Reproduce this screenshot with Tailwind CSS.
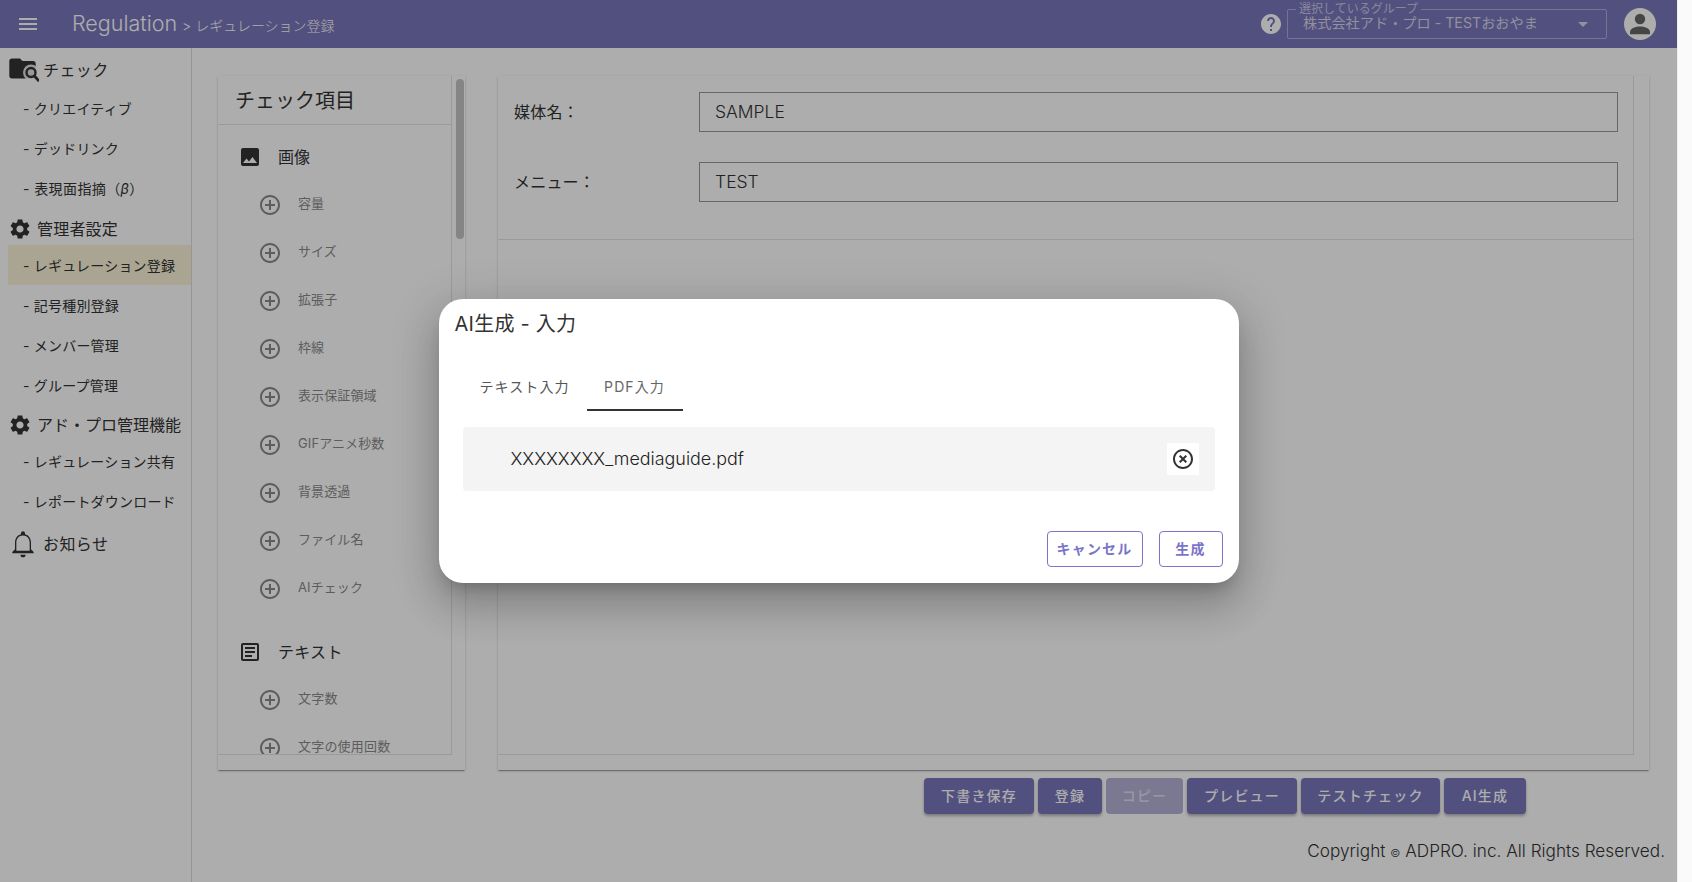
<!DOCTYPE html>
<html lang="ja">
<head>
<meta charset="UTF-8">
<title>Regulation</title>
<script src="https://cdn.jsdelivr.net/npm/@tailwindcss/browser@4"></script>
</head>
<body class="m-0 overflow-hidden bg-white [font-family:'Inter','Noto_Sans_CJK_JP',sans-serif] text-[#333]">
<div class="flex h-[882px] w-[1692px]">
  <div class="relative h-full w-[1677px] overflow-hidden">
    <!-- Header -->
    <header class="flex h-12 items-center bg-[#7a76bb] text-white">
      <svg class="ml-[16px] h-6 w-6" viewBox="0 0 24 24" fill="currentColor"><path d="M3 18h18v-2H3v2zm0-5h18v-2H3v2zm0-7v2h18V6H3z"/></svg>
      <span class="ml-[32px] text-[21.500px] font-light leading-none">Regulation</span>
      <span class="ml-[5px] mt-[3px] text-[14px] font-light">&gt; レギュレーション登録</span>
      <div class="ml-auto flex items-center">
        <svg class="h-6 w-6" viewBox="0 0 24 24" fill="#fff"><path d="M12 2C6.48 2 2 6.48 2 12s4.48 10 10 10 10-4.48 10-10S17.52 2 12 2zm1 17h-2v-2h2v2zm2.07-7.75l-.9.92C13.45 12.9 13 13.5 13 15h-2v-.5c0-1.1.45-2.1 1.17-2.83l1.24-1.26c.37-.36.59-.86.59-1.41 0-1.1-.9-2-2-2s-2 .9-2 2H8c0-2.21 1.79-4 4-4s4 1.79 4 4c0 .88-.36 1.68-.93 2.25z"/></svg>
        <div class="relative ml-[4px] flex h-[30px] w-[320px] items-center rounded-[2px] border border-white/40 pl-[15px] pr-[11px]">
          <span class="absolute left-[8px] top-[-8px] bg-[#7a76bb] px-[3px] text-[12px] leading-[14px] text-white/60">選択しているグループ</span>
          <span class="mt-[-3px] text-[14.200px] text-white/70">株式会社アド・プロ - TESTおおやま</span>
          <svg class="ml-auto h-6 w-6" viewBox="0 0 24 24" fill="#fff" fill-opacity=".7"><path d="M7 10l5 5 5-5z"/></svg>
        </div>
        <svg class="ml-[16px] mr-[20px] h-[34px] w-[34px]" viewBox="0 0 34 34"><circle cx="17" cy="17" r="16" fill="#fff"/><circle cx="17" cy="12" r="5.200" fill="#666"/><path d="M7 25c0-4 6-5.600 10-5.600S27 21 27 25v2.200H7z" fill="#666"/></svg>
      </div>
    </header>

    <div class="flex h-[834px]">
      <!-- Sidebar -->
      <nav class="h-full w-[192px] shrink-0 border-r border-[#ddd]">
        <div class="mt-[2px] flex h-[38px] items-center pl-[9px] pt-[2px] text-[16px] tracking-[.4px]">
          <svg class="mt-[1px] h-[27px] w-[30px]" viewBox="0 0 30 27"><path d="M3 1.500h8l2.500 2.500H24c1.600 0 2.700 1.100 2.700 2.700V19c0 1.500-1.100 2.500-2.700 2.500H3c-1.600 0-2.700-1-2.700-2.500V4C.3 2.500 1.400 1.500 3 1.500z" fill="#333"/><circle cx="22" cy="15.500" r="8" fill="#fff" fill-opacity=".85"/><circle cx="22" cy="15.500" r="4.500" fill="none" stroke="#333" stroke-width="2.400"/><path d="M25.500 19l3.800 4.300" stroke="#333" stroke-width="2.800" stroke-linecap="round"/></svg>
          <span class="ml-[4px]">チェック</span>
        </div>
        <a class="flex h-10 items-center pl-[23px] text-[14px] tracking-[.2px]">- クリエイティブ</a>
        <a class="flex h-10 items-center pl-[23px] text-[14px] tracking-[.2px]">- デッドリンク</a>
        <a class="flex h-10 items-center pl-[23px] text-[14px] tracking-[.4px]">- 表現面指摘（<i>β</i>）</a>
        <div class="flex h-[37px] items-center pl-[8px] pt-[5px] text-[16px] tracking-[.2px]">
          <svg class="h-6 w-6" viewBox="0 0 24 24" fill="#333"><path d="M19.14 12.94c.04-.3.06-.61.06-.94 0-.32-.02-.64-.07-.94l2.03-1.58c.18-.14.23-.41.12-.61l-1.92-3.32c-.12-.22-.37-.29-.59-.22l-2.39.96c-.5-.38-1.03-.7-1.62-.94l-.36-2.54c-.04-.24-.24-.41-.48-.41h-3.84c-.24 0-.43.17-.47.41l-.36 2.54c-.59.24-1.13.57-1.62.94l-2.39-.96c-.22-.08-.47 0-.59.22L2.74 8.87c-.12.21-.08.47.12.61l2.03 1.58c-.05.3-.09.63-.09.94s.02.64.07.94l-2.03 1.58c-.18.14-.23.41-.12.61l1.92 3.32c.12.22.37.29.59.22l2.39-.96c.5.38 1.03.7 1.62.94l.36 2.54c.05.24.24.41.48.41h3.84c.24 0 .44-.17.47-.41l.36-2.54c.59-.24 1.13-.56 1.62-.94l2.39.96c.22.08.47 0 .59-.22l1.92-3.32c.12-.22.07-.47-.12-.61l-2.01-1.58zM12 15.6c-1.98 0-3.6-1.62-3.6-3.6s1.62-3.6 3.6-3.6 3.6 1.62 3.6 3.6-1.62 3.6-3.6 3.6z"/></svg>
          <span class="ml-[5px]">管理者設定</span>
        </div>
        <a class="ml-[8px] flex h-10 items-center bg-[#fbf4d7] pl-[15px] text-[14px] tracking-[.2px]">- レギュレーション登録</a>
        <a class="flex h-10 items-center pl-[23px] text-[14px] tracking-[.2px]">- 記号種別登録</a>
        <a class="flex h-10 items-center pl-[23px] text-[14px] tracking-[.2px]">- メンバー管理</a>
        <a class="flex h-10 items-center pl-[23px] text-[14px] tracking-[.2px]">- グループ管理</a>
        <div class="flex h-[36px] items-center pl-[8px] pt-[4px] text-[16px]">
          <svg class="h-6 w-6" viewBox="0 0 24 24" fill="#333"><path d="M19.14 12.94c.04-.3.06-.61.06-.94 0-.32-.02-.64-.07-.94l2.03-1.58c.18-.14.23-.41.12-.61l-1.92-3.32c-.12-.22-.37-.29-.59-.22l-2.39.96c-.5-.38-1.03-.7-1.62-.94l-.36-2.54c-.04-.24-.24-.41-.48-.41h-3.84c-.24 0-.43.17-.47.41l-.36 2.54c-.59.24-1.13.57-1.62.94l-2.39-.96c-.22-.08-.47 0-.59.22L2.74 8.87c-.12.21-.08.47.12.61l2.03 1.58c-.05.3-.09.63-.09.94s.02.64.07.94l-2.03 1.58c-.18.14-.23.41-.12.61l1.92 3.32c.12.22.37.29.59.22l2.39-.96c.5.38 1.03.7 1.62.94l.36 2.54c.05.24.24.41.48.41h3.84c.24 0 .44-.17.47-.41l.36-2.54c.59-.24 1.13-.56 1.62-.94l2.39.96c.22.08.47 0 .59-.22l1.92-3.32c.12-.22.07-.47-.12-.61l-2.01-1.58zM12 15.6c-1.98 0-3.6-1.62-3.6-3.6s1.62-3.6 3.6-3.6 3.6 1.62 3.6 3.6-1.62 3.6-3.6 3.6z"/></svg>
          <span class="ml-[5px]">アド・プロ管理機能</span>
        </div>
        <a class="flex h-10 items-center pl-[23px] text-[14px] tracking-[.2px]">- レギュレーション共有</a>
        <a class="flex h-10 items-center pl-[23px] text-[14px] tracking-[.2px]">- レポートダウンロード</a>
        <div class="flex h-[45px] items-center pl-[7px] text-[16px] tracking-[.4px]">
          <svg class="h-[32px] w-[32px]" viewBox="0 0 24 24" fill="#333"><path d="M12 22c1.100 0 2-.9 2-2h-4c0 1.100.9 2 2 2zm6-6v-5c0-3.070-1.630-5.640-4.500-6.320V4c0-.83-.67-1.500-1.500-1.500s-1.500.67-1.500 1.500v.68C7.640 5.360 6 7.920 6 11v5l-2 2v1h16v-1l-2-2zm-1 1H7v-6c0-2.900 1.900-5.300 5-5.300s5 2.400 5 5.300v6z"/></svg>
          <span class="ml-[4px]">お知らせ</span>
        </div>
      </nav>

      <!-- Main -->
      <main class="min-w-0 flex-1">
        <div class="ml-[26px] mt-[28px] flex h-[694px] gap-[33px]">
          <!-- Check list card -->
          <section class="flex w-[247px] shadow-[0_2px_1px_-1px_rgba(0,0,0,.2),0_1px_1px_rgba(0,0,0,.14),0_1px_3px_rgba(0,0,0,.12)]">
            <div class="h-[679px] w-[234px] shrink-0 overflow-hidden border-r border-b border-[#e4e4e4]">
              <h2 class="flex h-[49px] items-center border-b border-[#e4e4e4] pl-[17px] pt-[1px] text-[20px] font-normal">チェック項目</h2>
              <div class="flex h-[56px] items-center pl-[20px] pt-[7px] text-[16px]">
                <svg class="h-6 w-6" viewBox="0 0 24 24" fill="#333"><path d="M19 3H5c-1.100 0-2 .9-2 2v14c0 1.100.9 2 2 2h14c1.100 0 2-.9 2-2V5c0-1.100-.9-2-2-2zM8.500 13.500l2.500 3.010L14.500 12l4.500 6H5l3.500-4.500z"/></svg>
                <span class="ml-[16px]">画像</span>
              </div>
              <ul class="text-[13px] tracking-[.1px] text-[#8a8a8a]">
                <li class="flex h-12 items-center pl-[40px]"><svg class="h-6 w-6 shrink-0" viewBox="0 0 24 24" fill="#8a8a8a"><path d="M13 7h-2v4H7v2h4v4h2v-4h4v-2h-4V7zm-1-5C6.480 2 2 6.480 2 12s4.480 10 10 10 10-4.480 10-10S17.520 2 12 2zm0 18c-4.410 0-8-3.590-8-8s3.590-8 8-8 8 3.590 8 8-3.590 8-8 8z"/></svg><span class="mb-[2px] ml-[16px]">容量</span></li>
                <li class="flex h-12 items-center pl-[40px]"><svg class="h-6 w-6 shrink-0" viewBox="0 0 24 24" fill="#8a8a8a"><path d="M13 7h-2v4H7v2h4v4h2v-4h4v-2h-4V7zm-1-5C6.480 2 2 6.480 2 12s4.480 10 10 10 10-4.480 10-10S17.520 2 12 2zm0 18c-4.410 0-8-3.590-8-8s3.590-8 8-8 8 3.590 8 8-3.590 8-8 8z"/></svg><span class="mb-[2px] ml-[16px]">サイズ</span></li>
                <li class="flex h-12 items-center pl-[40px]"><svg class="h-6 w-6 shrink-0" viewBox="0 0 24 24" fill="#8a8a8a"><path d="M13 7h-2v4H7v2h4v4h2v-4h4v-2h-4V7zm-1-5C6.480 2 2 6.480 2 12s4.480 10 10 10 10-4.480 10-10S17.520 2 12 2zm0 18c-4.410 0-8-3.590-8-8s3.590-8 8-8 8 3.590 8 8-3.590 8-8 8z"/></svg><span class="mb-[2px] ml-[16px]">拡張子</span></li>
                <li class="flex h-12 items-center pl-[40px]"><svg class="h-6 w-6 shrink-0" viewBox="0 0 24 24" fill="#8a8a8a"><path d="M13 7h-2v4H7v2h4v4h2v-4h4v-2h-4V7zm-1-5C6.480 2 2 6.480 2 12s4.480 10 10 10 10-4.480 10-10S17.520 2 12 2zm0 18c-4.410 0-8-3.590-8-8s3.590-8 8-8 8 3.590 8 8-3.590 8-8 8z"/></svg><span class="mb-[2px] ml-[16px]">枠線</span></li>
                <li class="flex h-12 items-center pl-[40px]"><svg class="h-6 w-6 shrink-0" viewBox="0 0 24 24" fill="#8a8a8a"><path d="M13 7h-2v4H7v2h4v4h2v-4h4v-2h-4V7zm-1-5C6.480 2 2 6.480 2 12s4.480 10 10 10 10-4.480 10-10S17.520 2 12 2zm0 18c-4.410 0-8-3.590-8-8s3.590-8 8-8 8 3.590 8 8-3.590 8-8 8z"/></svg><span class="mb-[2px] ml-[16px]">表示保証領域</span></li>
                <li class="flex h-12 items-center pl-[40px]"><svg class="h-6 w-6 shrink-0" viewBox="0 0 24 24" fill="#8a8a8a"><path d="M13 7h-2v4H7v2h4v4h2v-4h4v-2h-4V7zm-1-5C6.480 2 2 6.480 2 12s4.480 10 10 10 10-4.480 10-10S17.520 2 12 2zm0 18c-4.410 0-8-3.590-8-8s3.590-8 8-8 8 3.590 8 8-3.590 8-8 8z"/></svg><span class="mb-[2px] ml-[16px]">GIFアニメ秒数</span></li>
                <li class="flex h-12 items-center pl-[40px]"><svg class="h-6 w-6 shrink-0" viewBox="0 0 24 24" fill="#8a8a8a"><path d="M13 7h-2v4H7v2h4v4h2v-4h4v-2h-4V7zm-1-5C6.480 2 2 6.480 2 12s4.480 10 10 10 10-4.480 10-10S17.520 2 12 2zm0 18c-4.410 0-8-3.590-8-8s3.590-8 8-8 8 3.590 8 8-3.590 8-8 8z"/></svg><span class="mb-[2px] ml-[16px]">背景透過</span></li>
                <li class="flex h-12 items-center pl-[40px]"><svg class="h-6 w-6 shrink-0" viewBox="0 0 24 24" fill="#8a8a8a"><path d="M13 7h-2v4H7v2h4v4h2v-4h4v-2h-4V7zm-1-5C6.480 2 2 6.480 2 12s4.480 10 10 10 10-4.480 10-10S17.520 2 12 2zm0 18c-4.410 0-8-3.590-8-8s3.590-8 8-8 8 3.590 8 8-3.590 8-8 8z"/></svg><span class="mb-[2px] ml-[16px]">ファイル名</span></li>
                <li class="flex h-12 items-center pl-[40px]"><svg class="h-6 w-6 shrink-0" viewBox="0 0 24 24" fill="#8a8a8a"><path d="M13 7h-2v4H7v2h4v4h2v-4h4v-2h-4V7zm-1-5C6.480 2 2 6.480 2 12s4.480 10 10 10 10-4.480 10-10S17.520 2 12 2zm0 18c-4.410 0-8-3.590-8-8s3.590-8 8-8 8 3.590 8 8-3.590 8-8 8z"/></svg><span class="mb-[2px] ml-[16px]">AIチェック</span></li>
              </ul>
              <div class="mt-[15px] flex h-[48px] items-center pl-[20px] text-[16px] tracking-[.3px]">
                <svg class="h-6 w-6" viewBox="0 0 24 24" fill="#333"><path d="M19 5v14H5V5h14m0-2H5c-1.100 0-2 .9-2 2v14c0 1.100.9 2 2 2h14c1.100 0 2-.9 2-2V5c0-1.100-.9-2-2-2z"/><path d="M14 17H7v-2h7v2zm3-4H7v-2h10v2zm0-4H7V7h10v2z"/></svg>
                <span class="ml-[16px]">テキスト</span>
              </div>
              <ul class="text-[13px] tracking-[.2px] text-[#8a8a8a]">
                <li class="flex h-12 items-center pl-[40px]"><svg class="h-6 w-6 shrink-0" viewBox="0 0 24 24" fill="#8a8a8a"><path d="M13 7h-2v4H7v2h4v4h2v-4h4v-2h-4V7zm-1-5C6.480 2 2 6.480 2 12s4.480 10 10 10 10-4.480 10-10S17.520 2 12 2zm0 18c-4.410 0-8-3.590-8-8s3.590-8 8-8 8 3.590 8 8-3.590 8-8 8z"/></svg><span class="mb-[2px] ml-[16px]">文字数</span></li>
                <li class="flex h-12 items-center pl-[40px]"><svg class="h-6 w-6 shrink-0" viewBox="0 0 24 24" fill="#8a8a8a"><path d="M13 7h-2v4H7v2h4v4h2v-4h4v-2h-4V7zm-1-5C6.480 2 2 6.480 2 12s4.480 10 10 10 10-4.480 10-10S17.520 2 12 2zm0 18c-4.410 0-8-3.590-8-8s3.590-8 8-8 8 3.590 8 8-3.590 8-8 8z"/></svg><span class="mb-[2px] ml-[16px]">文字の使用回数</span></li>
              </ul>
            </div>
            <div class="ml-[4px] mt-[3px] h-[160px] w-[8px] rounded-[4px] bg-[#c4c4c4]"></div>
          </section>

          <!-- Regulation form card -->
          <section class="w-[1151px] shadow-[0_2px_1px_-1px_rgba(0,0,0,.2),0_1px_1px_rgba(0,0,0,.14),0_1px_3px_rgba(0,0,0,.12)]">
            <div class="h-[679px] w-[1136px] border-r border-b border-[#e4e4e4]">
              <div class="h-[164px] border-b border-[#e4e4e4] pl-[16px] pr-[15px] pt-[16px]">
                <div class="flex h-10 items-center">
                  <label class="w-[185px] text-[16px] tracking-[.2px]">媒体名：</label>
                  <div class="flex h-10 flex-1 items-center border border-[#999] pl-[15px] text-[17.500px] font-light">SAMPLE</div>
                </div>
                <div class="mt-[30px] flex h-10 items-center">
                  <label class="w-[185px] text-[16px] tracking-[.2px]">メニュー：</label>
                  <div class="flex h-10 flex-1 items-center border border-[#999] pl-[15px] text-[17.500px] font-light">TEST</div>
                </div>
              </div>
            </div>
          </section>
        </div>

        <!-- Action buttons -->
        <div class="ml-[732px] mt-[8px] flex gap-[4px] text-[14px] font-medium tracking-[1.200px] text-white">
          <button class="h-[36px] w-[110px] rounded-[4px] bg-[#7a76bb] pb-[2px] shadow-[0_2px_3px_rgba(0,0,0,.3)]">下書き保存</button>
          <button class="h-[36px] w-[64px] rounded-[4px] bg-[#7a76bb] pb-[2px] shadow-[0_2px_3px_rgba(0,0,0,.3)]">登録</button>
          <button class="h-[36px] w-[77px] rounded-[4px] bg-[#b6b3d8] pb-[2px] text-white/60">コピー</button>
          <button class="h-[36px] w-[110px] rounded-[4px] bg-[#7a76bb] pb-[2px] shadow-[0_2px_3px_rgba(0,0,0,.3)]">プレビュー</button>
          <button class="h-[36px] w-[139px] rounded-[4px] bg-[#7a76bb] pb-[2px] shadow-[0_2px_3px_rgba(0,0,0,.3)]">テストチェック</button>
          <button class="h-[36px] w-[82px] rounded-[4px] bg-[#7a76bb] pb-[2px] shadow-[0_2px_3px_rgba(0,0,0,.3)]">AI生成</button>
        </div>
        <footer class="mt-[24px] pr-[12px] text-right text-[17.200px] font-light leading-[26px]">Copyright <span class="text-[11px]">©</span> ADPRO. inc. All Rights Reserved.</footer>
      </main>
    </div>

    <!-- Dialog -->
    <div class="absolute inset-0 flex items-center justify-center bg-black/32">
      <div class="h-[284px] w-[800px] rounded-[24px] bg-white pl-[16px] pr-[16px] shadow-[0_11px_15px_-7px_rgba(0,0,0,.2),0_24px_38px_3px_rgba(0,0,0,.14),0_9px_46px_8px_rgba(0,0,0,.12)]">
        <h3 class="pt-[11px] text-[20px] font-normal leading-[28px] tracking-[.25px]">AI生成 - 入力</h3>
        <div class="ml-[8px] mt-[22px] flex h-[51px] text-[14px] tracking-[1.100px] text-[#666]">
          <button class="w-[124px] pt-[1px] text-[#555]">テキスト入力</button>
          <button class="w-[96px] border-b-2 border-[#333] pt-[3px]">PDF入力</button>
        </div>
        <div class="ml-[8px] mt-[16px] flex h-[64px] w-[752px] items-center rounded-[4px] bg-[#f4f4f4] pl-[48px] pr-[16px]">
          <span class="text-[17.900px] font-light text-[#222]">XXXXXXXX_mediaguide.pdf</span>
          <button class="ml-auto flex h-8 w-8 items-center justify-center bg-white">
            <svg class="h-6 w-6" viewBox="0 0 24 24" fill="#333"><path d="M14.590 8L12 10.590 9.410 8 8 9.410 10.590 12 8 14.590 9.410 16 12 13.410 14.590 16 16 14.590 13.410 12 16 9.410 14.590 8zM12 2C6.470 2 2 6.470 2 12s4.470 10 10 10 10-4.470 10-10S17.530 2 12 2zm0 18c-4.410 0-8-3.590-8-8s3.590-8 8-8 8 3.590 8 8-3.590 8-8 8z"/></svg>
          </button>
        </div>
        <div class="mt-[40px] flex justify-end gap-[16px] text-[14px] font-semibold tracking-[1.200px] text-[#7b75c9]">
          <button class="h-[36px] w-[96px] rounded-[4px] border border-[#7b75c9] pb-[2px]">キャンセル</button>
          <button class="h-[36px] w-[64px] rounded-[4px] border border-[#7b75c9] pb-[2px]">生成</button>
        </div>
      </div>
    </div>
  </div>
  <div class="h-full w-[15px] border-l border-[#eee] bg-[#fafafa]"></div>
</div>
</body>
</html>
